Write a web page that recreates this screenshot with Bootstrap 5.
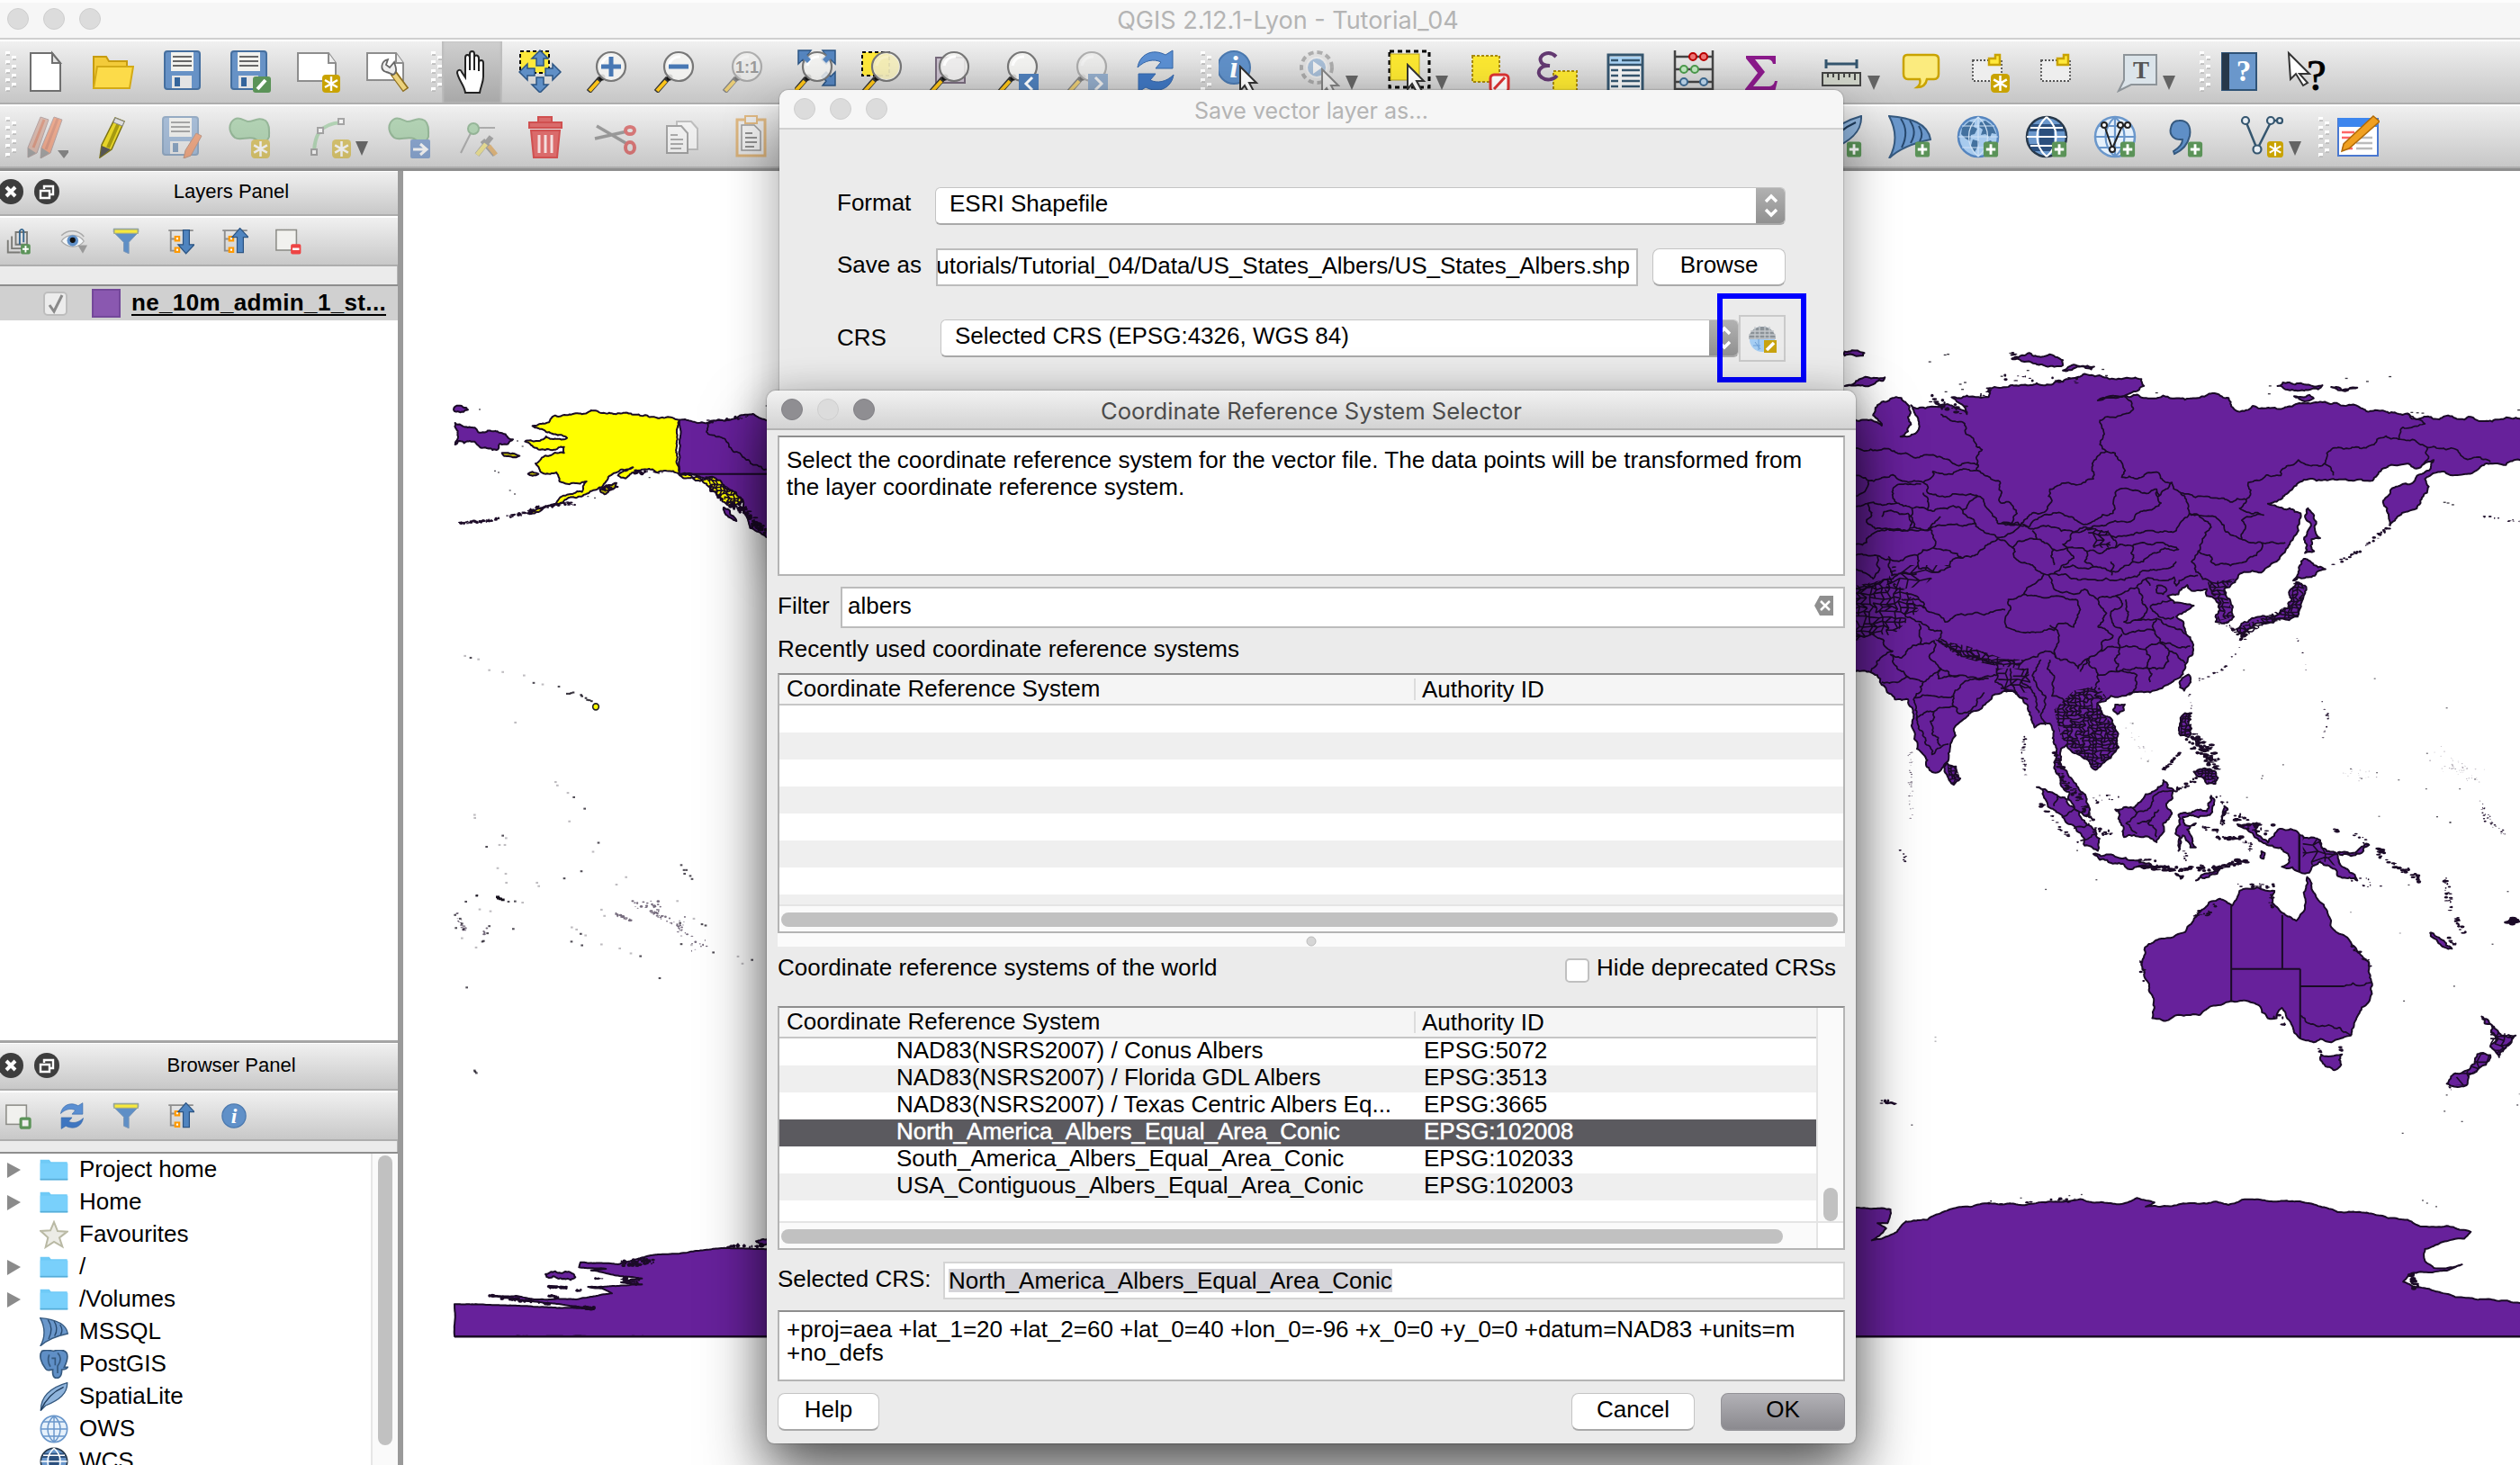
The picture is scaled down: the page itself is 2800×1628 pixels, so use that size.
<!DOCTYPE html>
<html lang="en">
<head>
<meta charset="utf-8">
<title>QGIS 2.12.1-Lyon - Tutorial_04</title>
<link rel="stylesheet" href="https://cdn.jsdelivr.net/npm/bootstrap@5.3.0/dist/css/bootstrap.min.css">
<script src="https://cdn.jsdelivr.net/npm/bootstrap@5.3.0/dist/js/bootstrap.bundle.min.js"></script>
<style>
html,body{width:2800px;height:1628px;overflow:hidden}
body{font:26px/30px "Liberation Sans",Arial,sans-serif;color:#000;background:#ebebeb}
svg{display:block;flex:none}
.titlebar{height:42px;flex:none;background:#f6f6f6;color:#b4b4b4;font-family:Inter,"Open Sans",sans-serif;font-size:25px;line-height:42px}
.lights{gap:16px}
.lights i{width:24px;height:24px;border-radius:50%;background:#dcdcdc;border:1.5px solid #cecece}
.lights i.on{background:#8f8e92;border-color:#828186}
.titlebar .cap{padding-top:3px}
.main-title{height:46px;padding-left:8px;border-bottom:2px solid #fff;box-shadow:inset 0 -2px #cfcfcf,inset 0 3px #fdfdfd;padding-bottom:2px}
.main-title .cap{padding-right:50px;font-size:27px;letter-spacing:0}
.toolstrip{flex:none;background:linear-gradient(#f0f0f0,#c6c6c6);border-bottom:2px solid #adadad}
.strip1{height:70px;padding-bottom:3px}
.strip2{height:74px;border-top:2px solid #fff;border-bottom:3px solid #8e8e8e;box-shadow:inset 0 -2px #adadad;padding-bottom:2px}
.faded{opacity:.5}
.pressed{background:linear-gradient(#cfcfcf,#a8a8a8);box-shadow:inset 2px 0 2px #bdbdbd,inset -2px 0 2px #bdbdbd;margin-bottom:-3px}
.side{width:448px;border-right:6px solid #9a9a9a;box-shadow:inset -1px 0 #b5b5b5}
.panelhead{height:50px;font-size:22px;background:linear-gradient(#f0f0f0,#c8c8c8);border-bottom:2px solid #adadad;border-top:1px solid #fff;padding-bottom:4px}
.panelhead.lower{height:53px;padding-bottom:3px}
.paneltools{height:56px;background:linear-gradient(#f0f0f0,#c8c8c8);border-bottom:2px solid #adadad;border-top:2px solid #fff}
.layers{height:843px;border-top:2px solid #8e8e8e;border-bottom:3px solid #a5a5a5;background:#fff}
.layerrow{height:38px;background:#d0d0d0;font-weight:700;padding-left:48px}
.tick{width:27px;height:27px;border:2px solid #bdbdbd;border-radius:5px;background:#ececec}
.swatch{width:32px;height:32px;background:#8a58b0;border:2px solid #74489a;margin-left:27px}
.lname{margin-left:12px;border-bottom:2px solid #000;line-height:26px;letter-spacing:.35px}
.tree{border-top:2px solid #8e8e8e;background:#fff;overflow:hidden}
.tree .item{height:36px;padding-left:7px}
.tree .item span{padding-bottom:3px;margin-left:12px}
.sbar{width:30px;background:#fafafa;border-left:2px solid #e6e6e6;padding:2px 6px}
.sbar b{display:block;width:16px;height:322px;border-radius:8px;background:#c1c1c1}
.mapview{background:#fff;overflow:hidden}
.win{position:absolute;background:#ebebeb;border-radius:10px 10px 0 0}
.win-save{left:866px;top:100px;width:1182px;height:500px;box-shadow:0 0 2px rgba(0,0,0,.45),0 24px 60px rgba(0,0,0,.38)}
.win-save .titlebar{border-radius:10px 10px 0 0;height:44px;border-bottom:2px solid #d0d0d0;padding-left:16px}
.win-save .form{padding:64px 64px 0 64px}
.win-crs{left:852px;top:434px;width:1210px;height:1170px;border-radius:10px 10px 8px 8px;box-shadow:0 0 2px rgba(0,0,0,.5),0 36px 70px rgba(0,0,0,.6),0 8px 44px rgba(0,0,0,.2)}
.win-crs .titlebar{height:44px;background:linear-gradient(#f2f2f2,#d3d3d3);color:#4b4b4b;border-radius:10px 10px 0 0;border-bottom:2px solid #b3b3b3;padding-left:16px;font-size:25.6px}
.fieldbox{background:#fff;border:2px solid #bcbcbc}
.combo{background:#fff;border:1.5px solid #c4c4c4;border-bottom:2px solid #a9a9a9;border-radius:6px;height:42px;overflow:hidden}
.combo .txt{padding:2px 0 0 15px}
.combo .knob{width:34px;background:linear-gradient(#b3b3b3,#8f8f8f);margin:-2px -2px -2px 0}
.pushbtn{background:#fff;border:1.5px solid #c4c4c4;border-bottom:2px solid #a9a9a9;border-radius:8px;height:42px;padding:0 0 6px;font-size:26px;line-height:30px;color:#000}
.pushbtn.okay{background:linear-gradient(#b2b1b6,#8b8a8f);border-color:#939297}
.marker{position:absolute;left:1908px;top:326px;width:99px;height:99px;border:6px solid #00f}
.txtbox{background:#fff;border:2px solid #b4b4b4;border-top-color:#8e8e8e;padding-left:8px}
.grid-t{background:#fff;border:2px solid #b4b4b4;border-top-color:#8e8e8e}
.grid-h{background:#f5f5f5;border-bottom:2px solid #c6c6c6}
.c1{width:705px;padding-left:8px}
.c2{border-left:2px solid #dcdcdc;padding-left:7px}
.r{height:30px;line-height:27px}
.r:nth-child(even){background:#efefef}
.r .c1{padding-left:130px}.r .c2{border:0;padding-left:11px}
.r.sel{background:#5b5a5f;color:#fff;-webkit-text-stroke:.5px #fff}
.hs{background:#fafafa;border-top:2px solid #e4e4e4;height:30px;padding:7px 2px}
.hs b{display:block;height:16px;border-radius:8px;background:#c1c1c1}
.seltext{background:#d5d4d9;line-height:26px;height:26px}
</style>
</head>
<body class="d-flex flex-column position-relative">
<div class="titlebar main-title d-flex align-items-center">
  <div class="lights d-flex"><i></i><i></i><i></i></div>
  <div class="cap flex-grow-1 text-center">QGIS 2.12.1-Lyon - Tutorial_04</div>
</div>
<div class="toolstrip strip1 d-flex align-items-center" id="bar1"></div>
<div class="toolstrip strip2 d-flex align-items-center" id="bar2"></div>
<div class="d-flex flex-grow-1" style="min-height:0">
  <aside class="side d-flex flex-column flex-shrink-0">
    <div class="panelhead d-flex align-items-center flex-shrink-0"><svg width="72" height="30"><use href="#dock"/></svg><span class="flex-grow-1 text-center">Layers Panel</span></div>
    <div class="paneltools d-flex align-items-center flex-shrink-0" id="bar3"></div>
    <div style="height:20px;flex:none"></div>
    <div class="layers flex-shrink-0">
      <div class="layerrow d-flex align-items-center"><span class="tick"><svg width="24" height="24"><path d="M5 13l5 7 9-18" fill="none" stroke="#8a8a8a" stroke-width="3"/></svg></span><span class="swatch"></span><span class="lname">ne_10m_admin_1_st...</span></div>
    </div>
    <div class="panelhead lower d-flex align-items-center flex-shrink-0"><svg width="72" height="30"><use href="#dock"/></svg><span class="flex-grow-1 text-center">Browser Panel</span></div>
    <div class="paneltools d-flex align-items-center flex-shrink-0" id="bar4"></div>
    <div style="height:12px;flex:none"></div>
    <div class="tree d-flex flex-grow-1"><div class="flex-grow-1" id="tree"></div><div class="sbar"><b></b></div></div>
  </aside>
  <main class="mapview flex-grow-1"><svg id="map" width="2352" height="1438" viewBox="448 190 2352 1438"></svg></main>
</div>

<section class="win win-save">
  <div class="titlebar d-flex align-items-center"><div class="lights d-flex"><i></i><i></i><i></i></div><div class="cap flex-grow-1 text-center" style="padding-right:120px">Save vector layer as...</div></div>
  <div class="form">
    <div class="d-flex" style="height:42px"><label style="width:109px;padding-top:2px">Format</label>
      <div class="combo d-flex flex-grow-1"><div class="txt flex-grow-1">ESRI Shapefile</div><div class="knob"><svg width="34" height="42"><use href="#updown"/></svg></div></div></div>
    <div class="d-flex" style="height:42px;margin-top:26px"><label style="width:110px;padding-top:3px">Save as</label>
      <div class="fieldbox d-flex justify-content-end overflow-hidden text-nowrap" style="width:780px;padding:2px 7px 0 0">utorials/Tutorial_04/Data/US_States_Albers/US_States_Albers.shp</div>
      <button class="pushbtn" style="width:148px;margin-left:16px">Browse</button></div>
    <div class="d-flex align-items-center" style="height:52px;margin-top:32px"><label style="width:115px;padding-bottom:3px">CRS</label>
      <div class="combo d-flex" style="width:887px"><div class="txt flex-grow-1">Selected CRS (EPSG:4326, WGS 84)</div><div class="knob"><svg width="34" height="42"><use href="#updown"/></svg></div></div>
      <div style="width:52px;height:52px;border:2px solid #cacaca;padding:8px 8px"><svg width="34" height="34" viewBox="0 0 34 34"><circle cx="16" cy="17" r="14" fill="#a5cdf3"/><path d="M1 17a15 14 0 0 1 30 0z" fill="#8b9298"/><path d="M1 12h30M3 8h26M1 16h30M8 3v14M13 2v14M19 2v14M24 3v14" stroke="#c4c8cc" stroke-width="1.3"/><path d="M8 20l6 8M6 24h8M12 17v12" stroke="#6d9fd6"/><rect x="18" y="18" width="14" height="14" fill="#c8a310"/><path d="M21 29l8-8" stroke="#fff" stroke-width="3.5"/></svg></div></div>
  </div>
</section>
<div class="marker"></div>

<section class="win win-crs">
  <div class="titlebar d-flex align-items-center"><div class="lights d-flex"><i class="on"></i><i></i><i class="on"></i></div><div class="cap flex-grow-1 text-center" style="padding-right:120px">Coordinate Reference System Selector</div></div>
  <div style="padding:6px 12px 0">
    <div class="txtbox" style="height:156px;padding-top:10px">Select the coordinate reference system for the vector file. The data points will be transformed from<br>the layer coordinate reference system.</div>
    <div class="d-flex" style="height:46px;margin-top:12px"><label style="width:70px;padding-top:6px">Filter</label><div class="fieldbox flex-grow-1 d-flex justify-content-between" style="padding:4px 9px 0 6px"><span>albers</span><svg width="24" height="28" viewBox="0 0 24 28"><path d="M7 4h15v22H7l-6-11z" fill="#8f8f8f"/><path d="M8 10l10 10M18 10L8 20" stroke="#fff" stroke-width="2.5"/></svg></div></div>
    <div style="height:50px;padding-top:8px">Recently used coordinate reference systems</div>
    <div class="grid-t d-flex flex-column" style="height:289px"><div class="grid-h d-flex" style="height:34px;line-height:31px"><div class="c1">Coordinate Reference System</div><div class="c2 my-1" style="line-height:24px">Authority ID</div></div>
      <div class="flex-grow-1 overflow-hidden"><div class="r"></div><div class="r"></div><div class="r"></div><div class="r"></div><div class="r"></div><div class="r"></div><div class="r"></div><div class="r"></div></div>
      <div class="hs flex-shrink-0"><b style="width:1174px"></b></div></div>
    <div class="d-flex justify-content-center align-items-center" style="height:15px;background:#fbfbfb;padding-top:2px"><svg width="12" height="12"><circle cx="6" cy="6" r="5" fill="#d6d6d6" stroke="#bcbcbc"/></svg></div>
    <div class="d-flex justify-content-between" style="height:66px;padding:8px 10px 0 0"><span>Coordinate reference systems of the world</span><span class="d-flex"><span style="width:27px;height:27px;margin:5px 8px 0 0;background:#fff;border:2px solid #c0c0c0;border-radius:5px"></span>Hide deprecated CRSs</span></div>
    <div class="grid-t d-flex" style="height:271px"><div class="d-flex flex-column" style="width:1152px"><div class="grid-h d-flex flex-shrink-0" style="height:34px;line-height:31px"><div class="c1">Coordinate Reference System</div><div class="c2 my-1" style="line-height:24px">Authority ID</div></div>
      <div class="flex-grow-1" id="rows"></div>
      <div class="hs flex-shrink-0"><b style="width:1113px"></b></div></div>
      <div class="flex-grow-1" style="border-left:2px solid #e4e4e4;background:#fafafa;padding-top:200px"><b class="d-block" style="width:16px;height:37px;border-radius:8px;background:#c1c1c1;margin-left:6px"></b><div style="height:30px;border-top:2px solid #e4e4e4;background:#fff"></div></div></div>
    <div class="d-flex" style="height:42px;margin-top:13px"><label style="width:184px;padding-top:4px">Selected CRS:</label><div class="flex-grow-1 d-flex" style="background:#fff;border:2px solid #d4d4d4;padding:6px 4px"><span class="seltext">North_America_Albers_Equal_Area_Conic</span></div></div>
    <div class="txtbox" style="height:79px;margin-top:12px;line-height:26px;padding-top:6px">+proj=aea +lat_1=20 +lat_2=60 +lat_0=40 +lon_0=-96 +x_0=0 +y_0=0 +datum=NAD83 +units=m<br>+no_defs</div>
    <div class="d-flex" style="margin-top:13px"><button class="pushbtn me-auto" style="width:113px">Help</button><button class="pushbtn" style="width:137px;margin-right:29px">Cancel</button><button class="pushbtn okay" style="width:138px">OK</button></div>
  </div>
</section>

<svg width="0" height="0" class="position-absolute"><defs>
<symbol id="dock" viewBox="0 0 72 30"><circle cx="12" cy="15" r="14" fill="#3d3d3d"/><path d="M7 10l10 10M17 10L7 20" stroke="#fff" stroke-width="4"/><circle cx="52" cy="15" r="14" fill="#3d3d3d"/><path d="M45 14h10v8H45zM49 12V9h10v9h-3" fill="none" stroke="#fff" stroke-width="2.4"/></symbol>
<symbol id="updown" viewBox="0 0 34 42"><path d="M11 17l6-6 6 6M11 26l6 6 6-6" fill="none" stroke="#fff" stroke-width="3.4"/></symbol>
<symbol id="grip" viewBox="0 0 48 48"><g fill="#fff"><path d="M18 2h5v4h-5zM25 7h5v4h-5zM18 12h5v4h-5zM25 17h5v4h-5zM18 22h5v4h-5zM25 27h5v4h-5zM18 32h5v4h-5zM25 37h5v4h-5zM18 42h5v4h-5z"/></g><path d="M19 6h4M26 11h4M19 16h4M26 21h4M19 26h4M26 31h4M19 36h4M26 41h4M19 46h4" stroke="#b5b5b5" stroke-width="1.5"/></symbol>
<symbol id="arr" viewBox="0 0 48 48"><path d="M17 29h14l-7 16z" fill="#646464"/></symbol>
<symbol id="bplus" viewBox="0 0 20 20"><rect x="1" y="1" width="17" height="18" rx="3" fill="#5b9358"/><path d="M9.500 4v12M4 10h11" stroke="#fff" stroke-width="3"/></symbol>
<symbol id="bstar" viewBox="0 0 20 20"><rect width="20" height="20" rx="4" fill="#c9a300"/><path d="M10 2v16M3 6l14 8M17 6L3 14" stroke="#fff" stroke-width="2.4"/></symbol>
<symbol id="lens" viewBox="0 0 48 48"><path d="M17 32L4 47" stroke="#333" stroke-width="6"/><path d="M15 35L5 46" stroke="#fcc419" stroke-width="4"/><circle cx="19" cy="31" r="3.500" fill="#111"/><circle cx="29" cy="19" r="16" fill="#f4f5f2" fill-opacity=".85" stroke="#777" stroke-width="2.200"/><path d="M18 18a12 12 0 0 1 13-10" stroke="#fff" stroke-width="3" fill="none"/></symbol>
<symbol id="new" viewBox="0 0 48 48"><path d="M8 4h24l9 11v31H8z" fill="#fff" stroke="#6f6f6f" stroke-width="2"/><path d="M32 4v11h9z" fill="#e4e4e4" stroke="#6f6f6f" stroke-width="2"/></symbol>
<symbol id="open" viewBox="0 0 48 48"><path d="M3 8h14l3 5h20v6H9L3 42z" fill="#f3cb3a" stroke="#c79c10" stroke-width="2"/><path d="M7 19h40l-4 24H3z" fill="#fcdb49" stroke="#d3aa16" stroke-width="2"/></symbol>
<symbol id="save" viewBox="0 0 48 48"><rect x="5" y="2" width="39" height="42" rx="3" fill="#6792c6" stroke="#456f9f" stroke-width="2"/><rect x="12" y="3" width="25" height="21" fill="#f2f2ee"/><path d="M14 8h21M14 13h21M14 18h21" stroke="#666" stroke-width="2"/><rect x="13" y="29" width="22" height="14" fill="#e4e4e4"/><rect x="16" y="31" width="6" height="10" fill="#35659c"/></symbol>
<symbol id="saveas" viewBox="0 0 48 48"><use href="#save" x="-3"/><rect x="26" y="30" width="20" height="18" rx="3" fill="#5b9358"/><path d="M31 44l9-10" stroke="#fff" stroke-width="4"/></symbol>
<symbol id="ncomp" viewBox="0 0 48 48"><path d="M1 4h34l8 11v20H1z" fill="#fff" stroke="#8d8d8d" stroke-width="2"/><path d="M35 4v11h8" fill="#eee" stroke="#8d8d8d" stroke-width="2"/><use href="#bstar" x="28" y="28" width="20" height="20"/></symbol>
<symbol id="mcomp" viewBox="0 0 48 48"><path d="M1 4h32l8 11v19H1z" fill="#fff" stroke="#8d8d8d" stroke-width="2"/><path d="M33 4v11h8" fill="#eee" stroke="#8d8d8d" stroke-width="2"/><path d="M30 26l14 19" stroke="#8d6d1c" stroke-width="8"/><path d="M31 28l12 16" stroke="#ecd27c" stroke-width="5"/><path d="M24 11c-8 2-9 12-2 14 5 1 8 5 10 1 3-4 0-7-1-12l-5 6-4-3z" fill="#eee" stroke="#666" stroke-width="1.800"/></symbol>
<symbol id="hand" viewBox="0 0 48 48"><path d="M16 47c-1-8-7-13-9-22 0-4 4-4 5-1l4 6V8c0-4 5-4 5 0V4c0-4 5-4 5 0v4c0-4 5-3 5 1v5c0-4 5-4 5 0v15c0 7-3 11-4 18z" fill="#fff" stroke="#222" stroke-width="2"/><path d="M21 8v14M26 8v14M31 12v11" stroke="#222" stroke-width="2"/></symbol>
<symbol id="pansel" viewBox="0 0 48 48"><rect x="2" y="2" width="32" height="24" fill="#ffe93b" stroke="#000" stroke-width="2" stroke-dasharray="4 3"/><path d="M24 1l9 9h-5v8h-8v-8h-5zM24 48l9-9h-5v-8h-8v8h-5zM1 25l9-9v5h8v8h-8v5zM47 25l-9-9v5h-8v8h8v5z" fill="#5f8fc6" stroke="#2c5584" stroke-width="1.500"/></symbol>
<symbol id="zin" viewBox="0 0 48 48"><use href="#lens"/><path d="M29 8v22M18 19h22" stroke="#4878b4" stroke-width="5"/></symbol>
<symbol id="zout" viewBox="0 0 48 48"><use href="#lens"/><path d="M18 19h22" stroke="#4878b4" stroke-width="5"/></symbol>
<symbol id="z11" viewBox="0 0 48 48"><use href="#lens"/><text x="29" y="26" text-anchor="middle" font-size="18" font-weight="700" fill="#555">1:1</text></symbol>
<symbol id="zfull" viewBox="0 0 48 48"><path d="M4 1h14l-4 5 5 5-5 5-5-5-5 5zM45 1H31l4 5-5 5 5 5 5-5 5 5zM45 40H31l4-5-5-5 5-5 5 5 5-5z" fill="#5585bf" stroke="#2c5584" stroke-width="1.500"/><use href="#lens" x="-4"/><path d="M5 2h12l-4 4 5 5-4 4-5-5-4 4zM44 2H32l4 4-5 5 4 4 5-5 4 4z" fill="#5585bf"/></symbol>
<symbol id="zsel" viewBox="0 0 48 48"><rect x="2" y="3" width="30" height="26" fill="#ffe93b" stroke="#000" stroke-width="2" stroke-dasharray="4 3"/><use href="#lens"/><circle cx="29" cy="19" r="14" fill="#f3e9a0" fill-opacity=".6"/></symbol>
<symbol id="zlay" viewBox="0 0 48 48"><rect x="9" y="9" width="32" height="28" fill="#c9bfcc" stroke="#776a7c" stroke-width="2"/><use href="#lens"/></symbol>
<symbol id="zlast" viewBox="0 0 48 48"><use href="#lens"/><rect x="25" y="27" width="22" height="21" fill="#4f7fba"/><path d="M40 31l-7 7 7 7" fill="none" stroke="#fff" stroke-width="3"/></symbol>
<symbol id="znext" viewBox="0 0 48 48"><use href="#lens"/><rect x="25" y="27" width="22" height="21" fill="#4f7fba"/><path d="M33 31l7 7-7 7" fill="none" stroke="#fff" stroke-width="3"/></symbol>
<symbol id="refresh" viewBox="0 0 48 48"><path d="M4 20C6 6 20-2 35 6l8-5v20H24l6-7c-8-4-18-2-26 6z" fill="#5b8fd2" stroke="#3566a8"/><path d="M44 28c-2 14-16 22-31 14l-8 5V27h19l-6 7c8 4 18 2 26-6z" fill="#3f76c0" stroke="#3566a8"/></symbol>
<symbol id="info" viewBox="0 0 48 48"><circle cx="24" cy="20" r="18" fill="#6090c8" stroke="#4a78ae" stroke-width="2"/><text x="24" y="31" text-anchor="middle" font-family="Liberation Serif" font-size="34" font-style="italic" font-weight="700" fill="#fff">i</text></symbol>
<symbol id="cur" viewBox="0 0 48 48"><path d="M2 2l18 18h-8l7 13-5 3-7-13-5 6z" fill="#fff" stroke="#333" stroke-width="2"/></symbol>
<symbol id="identify" viewBox="0 0 48 48"><use href="#info" x="-7"/><use href="#cur" x="22" y="17"/></symbol>
<symbol id="gear" viewBox="0 0 48 48"><circle cx="22" cy="20" r="17" fill="#ddd" stroke="#777" stroke-width="4" stroke-dasharray="6 4"/><circle cx="22" cy="20" r="11" fill="#6f9ccc" stroke="#eee" stroke-width="2"/><path d="M18 13l10 7-10 7z" fill="#fff"/><use href="#cur" x="26" y="20"/></symbol>
<symbol id="select" viewBox="0 0 48 48"><rect x="2" y="2" width="44" height="40" fill="none" stroke="#000" stroke-width="3" stroke-dasharray="5 4"/><rect x="3" y="5" width="32" height="29" fill="#fbe731" stroke="#b9a31a"/><use href="#cur" x="20" y="15"/></symbol>
<symbol id="desel" viewBox="0 0 48 48"><rect x="2" y="7" width="30" height="29" fill="#fbe731" stroke="#a88a10" stroke-width="2" stroke-dasharray="3 2"/><rect x="22" y="28" width="20" height="19" rx="4" fill="#fff" stroke="#d33" stroke-width="3"/><path d="M26 44l12-13" stroke="#d33" stroke-width="3"/></symbol>
<symbol id="eps" viewBox="0 0 48 48"><rect x="19" y="24" width="26" height="24" fill="#fbe731" stroke="#a88a10" stroke-width="2" stroke-dasharray="3 2"/><path d="M22 8C14 0 2 6 5 13c1 4 6 5 10 5C4 17-1 26 6 31c5 4 13 3 17-2" fill="none" stroke="#643a72" stroke-width="4"/></symbol>
<symbol id="table" viewBox="0 0 48 48"><rect x="5" y="6" width="38" height="42" fill="#f5f5f5" stroke="#35566f" stroke-width="3"/><rect x="7" y="8" width="34" height="8" fill="#a9d3f5"/><path d="M5 17h38M8 12h8M20 12h20M8 23h8M20 23h20M8 29h8M20 29h20M8 35h8M20 35h20M8 41h8M20 41h20" stroke="#35566f" stroke-width="2.500"/></symbol>
<symbol id="abacus" viewBox="0 0 48 48"><path d="M3 1v46M45 1v46M3 8h42M3 22h42M3 36h42M3 44h42" stroke="#444" stroke-width="2.500"/><g stroke-width="2"><g fill="#e77" stroke="#b00"><circle cx="23" cy="8" r="4"/><circle cx="35" cy="8" r="4"/></g><g fill="#bfe6bf" stroke="#4c9a4c"><circle cx="13" cy="22" r="4"/><circle cx="25" cy="22" r="4"/></g><g fill="#bcd6ec" stroke="#3f6b92"><circle cx="13" cy="36" r="4"/><circle cx="35" cy="36" r="4"/></g></g></symbol>
<symbol id="sigma" viewBox="0 0 48 48"><path d="M7 7h33v9h-3c-1-4-3-5-7-5H17l11 14-13 16h16c5 0 7-2 8-6h3l-3 12H6v-3l14-18L7 10z" fill="#8b1a8b"/></symbol>
<symbol id="ruler" viewBox="0 0 48 48"><path d="M7 16h34M7 11v10M41 11v10" stroke="#35566f" stroke-width="3"/><rect x="3" y="26" width="42" height="14" fill="#cfd3c8" stroke="#444" stroke-width="2"/><path d="M9 26v5M15 26v5M21 26v8M27 26v5M33 26v5M39 26v8" stroke="#444" stroke-width="2"/></symbol>
<symbol id="bubble" viewBox="0 0 48 48"><path d="M9 6h30c4 0 5 2 5 5v16c0 4-2 6-5 6h-8c-1 6-5 9-11 9 4-3 4-6 3-9H10c-4 0-5-3-5-6V11c0-3 1-5 4-5z" fill="#fbeb7e" stroke="#c9a300" stroke-width="2.500"/></symbol>
<symbol id="bookm" viewBox="0 0 48 48"><rect x="4" y="12" width="32" height="23" fill="#eee" stroke="#555" stroke-width="1.800" stroke-dasharray="2 2"/><path d="M24 10h5V6h5v11H22v-7z" fill="#ffe93b" stroke="#c9a300" stroke-width="2.500"/></symbol>
<symbol id="nbookm" viewBox="0 0 48 48"><use href="#bookm"/><use href="#bstar" x="24" y="27" width="21" height="21"/></symbol>
<symbol id="annot" viewBox="0 0 48 48"><path d="M8 6h36v33H16L2 46l6-12z" fill="#dbe4ea" stroke="#8d9499" stroke-width="2"/><text x="27" y="32" text-anchor="middle" font-family="Liberation Serif" font-size="27" font-weight="700" fill="#555">T</text></symbol>
<symbol id="help" viewBox="0 0 48 48"><rect x="5" y="4" width="38" height="41" fill="#6a97cb" stroke="#2f5377" stroke-width="2"/><rect x="5" y="4" width="8" height="41" fill="#27384a"/><text x="29" y="35" text-anchor="middle" font-family="Liberation Serif" font-size="33" font-weight="700" fill="#fff">?</text></symbol>
<symbol id="what" viewBox="0 0 48 48"><path d="M3 4l23 23H15l9 10-5 3-8-13-6 6z" fill="#fff" stroke="#333" stroke-width="2"/><text x="34" y="45" text-anchor="middle" font-family="Liberation Serif" font-size="48" fill="#000" stroke="#000">?</text></symbol>
<symbol id="pens" viewBox="0 0 48 48"><path d="M17 2l9 3L13 42 3 47V36z" fill="#c98d77" stroke="#866" stroke-width="1"/><path d="M32 2l9 3-13 37-11 6 1-12z" fill="#f0703c" stroke="#866"/><path d="M36 4L23 38M21 5L9 36" stroke="#c9532b" stroke-width="3"/><path d="M3 36l9 6-9 5zM18 36l9 6-10 6z" fill="#666"/><path d="M36 39h14l-7 9z" fill="#333"/></symbol>
<symbol id="pen" viewBox="0 0 48 48"><path d="M27 3l10 4-14 31-13 9 2-14z" fill="#e6d428" stroke="#7d7414" stroke-width="1.500"/><path d="M32 6L19 36" stroke="#a69a10" stroke-width="4"/><path d="M27 3l10 4-2 5-10-4z" fill="#ddd" stroke="#888"/><path d="M12 34l10 4-12 9z" fill="#555"/></symbol>
<symbol id="sedit" viewBox="0 0 48 48"><use href="#save" x="-2"/><path d="M40 20l6 3-12 22-8 3 2-9z" fill="#ef6c2a" stroke="#9a5030"/></symbol>
<symbol id="blob" viewBox="0 0 48 48"><path d="M3 8c6-8 12-3 18-1 6 1 12-6 20-1 5 4 4 12 4 18-3 8-10 6-16 2-8-3-16 3-22-1C1 20 0 13 3 8z" fill="#7fbf83" stroke="#4b8a50" stroke-width="2"/></symbol>
<symbol id="ablob" viewBox="0 0 48 48"><use href="#blob"/><use href="#bstar" x="25" y="27" width="21" height="21"/></symbol>
<symbol id="mblob" viewBox="0 0 48 48"><use href="#blob"/><rect x="25" y="27" width="22" height="21" rx="2" fill="#3467b5"/><path d="M28 38h14M36 32l7 6-7 6" fill="none" stroke="#fff" stroke-width="3"/></symbol>
<symbol id="curve" viewBox="0 0 48 48"><path d="M6 40C7 22 12 10 36 8" fill="none" stroke="#7fbf83" stroke-width="4"/><g fill="#fff" stroke="#666" stroke-width="2"><path d="M3 38h6v6H3zM10 14h6v6h-6zM33 4h6v6h-6z"/></g><use href="#bstar" x="26" y="27" width="21" height="21"/></symbol>
<symbol id="node" viewBox="0 0 48 48"><path d="M4 42L18 14h24" stroke="#777" stroke-width="2" fill="none"/><circle cx="18" cy="15" r="6" fill="#7fbf83" stroke="#4b8a50" stroke-width="2"/><path d="M22 44l16-20M28 28l14 16" stroke="#666" stroke-width="6"/><path d="M22 44l10-12" stroke="#ecd84c" stroke-width="5"/><path d="M35 34l8 10" stroke="#d88b20" stroke-width="5"/></symbol>
<symbol id="trash" viewBox="0 0 48 48"><path d="M6 8h36v6H6zM16 8V2h15v6" fill="#da6b6b" stroke="#d05050" stroke-width="2"/><path d="M8 17h32l-3 30H11z" fill="#da6b6b" stroke="#d05050" stroke-width="2"/><path d="M17 22v20M24 22v20M31 22v20" stroke="#f3dede" stroke-width="3"/></symbol>
<symbol id="cut" viewBox="0 0 48 48"><path d="M4 12l34 20M2 26l36-8" stroke="#555" stroke-width="3.500"/><g fill="none" stroke="#c11" stroke-width="4"><ellipse cx="41" cy="17" rx="5" ry="4"/><ellipse cx="41" cy="36" rx="5" ry="6"/></g></symbol>
<symbol id="copy" viewBox="0 0 48 48"><path d="M19 7h16l7 8v23H19z" fill="#fff" stroke="#999" stroke-width="2"/><path d="M8 12h16l7 8v22H8z" fill="#fff" stroke="#666" stroke-width="2"/><path d="M12 22h8M12 27h14M12 32h14M12 37h12" stroke="#777" stroke-width="2"/></symbol>
<symbol id="paste" viewBox="0 0 48 48"><rect x="9" y="5" width="31" height="40" fill="#eee" stroke="#d88b20" stroke-width="3"/><rect x="18" y="1" width="13" height="8" fill="#eee" stroke="#d88b20" stroke-width="2"/><path d="M14 11h14l7 7v21H14z" fill="#fff" stroke="#555" stroke-width="1.500"/><path d="M18 20h8M18 25h13M18 30h13M18 35h10" stroke="#444" stroke-width="2"/></symbol>
<symbol id="feather" viewBox="0 0 48 48"><path d="M2 47C2 28 14 10 46 1c1 16-10 28-36 38z" fill="#8fb4dc" stroke="#35597f" stroke-width="2"/><path d="M2 47C10 28 22 16 40 8" fill="none" stroke="#1e3a5a" stroke-width="2"/></symbol>
<symbol id="sail" viewBox="0 0 48 48"><path d="M1 1c24 2 43 8 46 26C28 31 12 37 1 48c8-14 9-30 0-47z" fill="#6a97cb" stroke="#35597f" stroke-width="2"/><path d="M14 4c7 10 7 20 1 32M24 6c6 9 6 16 1 25M34 12c4 6 4 12 1 17" fill="none" stroke="#27486d" stroke-width="2"/></symbol>
<symbol id="gwire" viewBox="0 0 48 48"><circle cx="24" cy="24" r="22" fill="#e6f1fb" stroke="#6a97cb" stroke-width="2.500"/><path d="M2 24h44M6 12h36M6 36h36M24 2v44M24 2c-14 12-14 32 0 44M24 2c14 12 14 32 0 44" fill="none" stroke="#6a97cb" stroke-width="2.200"/></symbol>
<symbol id="gdark" viewBox="0 0 48 48"><circle cx="24" cy="24" r="22" fill="#6a97cb" stroke="#27384a" stroke-width="2.500"/><path d="M8 10h32l4 8H4zM16 18h16v14H16zM4 32h40l-5 8H9z" fill="#2b4f7d"/><path d="M2 24h44M6 14h36M6 34h36M24 2c-14 12-14 32 0 44M24 2c14 12 14 32 0 44" fill="none" stroke="#fff" stroke-width="2.200"/></symbol>
<symbol id="gmap" viewBox="0 0 48 48"><circle cx="24" cy="24" r="22" fill="#a8cbee" stroke="#5585bf" stroke-width="2.500"/><path d="M6 14l8-7 6 1-1 5 4 2-3 6-4 1-1 7-5-3-5-5zM26 8l6-2 8 6 4 9-5-1-2 5-5-4-5 1 2-6-4-3zM18 27l7 2-1 5-4 7-4-7zM32 30l6-2 3 4-6 7z" fill="#43719f"/><path d="M24 2v44M2 24h44M6 12h36M6 36h36M24 2c-14 12-14 32 0 44M24 2c14 12 14 32 0 44" fill="none" stroke="#cfe2f5" stroke-width="1.200"/></symbol>
<symbol id="afeather" viewBox="0 0 48 48"><use href="#feather"/><use href="#bplus" x="29" y="28" width="19" height="20"/></symbol>
<symbol id="asail" viewBox="0 0 48 48"><use href="#sail"/><use href="#bplus" x="29" y="28" width="19" height="20"/></symbol>
<symbol id="agmap" viewBox="0 0 48 48"><use href="#gmap"/><use href="#bplus" x="29" y="28" width="19" height="20"/></symbol>
<symbol id="agdark" viewBox="0 0 48 48"><use href="#gdark"/><use href="#bplus" x="29" y="28" width="19" height="20"/></symbol>
<symbol id="agwfs" viewBox="0 0 48 48"><use href="#gwire"/><path d="M12 11l9 26L32 12l5-1" fill="none" stroke="#222" stroke-width="2"/><g fill="#fff" stroke="#222" stroke-width="2"><circle cx="12" cy="11" r="3"/><circle cx="21" cy="38" r="3"/><circle cx="30" cy="11" r="3"/><circle cx="38" cy="11" r="3"/></g><use href="#bplus" x="29" y="28" width="19" height="20"/></symbol>
<symbol id="comma" viewBox="0 0 48 48"><path d="M20 6c9-1 14 6 12 17-2 9-8 16-17 20l-1-3c7-4 10-9 10-13C14 28 9 22 11 14c1-5 4-8 9-8z" fill="#5f8fc6" stroke="#35597f" stroke-width="2"/><use href="#bplus" x="29" y="28" width="19" height="20"/></symbol>
<symbol id="vshape" viewBox="0 0 48 48"><path d="M6 6l13 32L35 6h8" fill="none" stroke="#35566f" stroke-width="2.500"/><g fill="#e8eef4" stroke="#35566f" stroke-width="2.200"><circle cx="6" cy="6" r="4"/><circle cx="19" cy="38" r="4.500"/><circle cx="34" cy="6" r="4"/><circle cx="44" cy="6" r="3"/></g><use href="#bstar" x="30" y="28" width="18" height="20"/></symbol>
<symbol id="editdoc" viewBox="0 0 48 48"><rect x="2" y="4" width="44" height="41" fill="#fff" stroke="#4a78d0" stroke-width="2"/><rect x="2" y="3" width="44" height="10" fill="#3d86ee"/><path d="M6 19h14M6 25h10M6 37h12" stroke="#f66" stroke-width="2.500"/><path d="M24 25h16M22 31h18M22 37h18" stroke="#bbb" stroke-width="2.500"/><path d="M41 1l7 6-34 30-8 3 2-8z" fill="#f0a020" stroke="#b06a08" stroke-width="1.500"/></symbol>
<symbol id="p-add" viewBox="0 0 48 48"><path d="M6 22v22h22M13 15v22h20M20 8h20v22H20z" fill="none" stroke="#7a7a76" stroke-width="3"/><path d="M27 30V6q4-6 7 0v20" fill="none" stroke="#35668f" stroke-width="3"/><use href="#bplus" x="28" y="28" width="20" height="20"/></symbol>
<symbol id="p-eye" viewBox="0 0 48 48"><path d="M2 24c10-14 30-14 40 0-10 14-30 12-40 0z" fill="#f3f6f8" stroke="#aaa" stroke-width="2"/><path d="M2 14c12-12 30-10 40 2" fill="none" stroke="#aaa" stroke-width="2.500"/><circle cx="22" cy="23" r="10" fill="#6090c8"/><circle cx="22" cy="22" r="5" fill="#111"/><path d="M31 31h17l-8 15z" fill="#999"/></symbol>
<symbol id="p-filter" viewBox="0 0 48 48"><path d="M2 2h44v6L29 26v20l-9-4V26L2 8z" fill="#5f8fc6" stroke="#7a95b5" stroke-width="1.500"/><path d="M3 3h42v7H3z" fill="#f7e93c" stroke="#9ea88c" stroke-width="2"/></symbol>
<symbol id="p-up" viewBox="0 0 48 48"><path d="M2 5h44M6 5v36h10M6 20h10" fill="none" stroke="#8d8d8d" stroke-width="3"/><path d="M14 16h7v7h-7zM14 36h7v7h-7z" fill="#fff" stroke="#f90" stroke-width="3.500"/><path d="M33 1l15 16h-9v27H28V17h-9z" fill="#5085c0" stroke="#2c5584" stroke-width="2"/></symbol>
<symbol id="p-down" viewBox="0 0 48 48"><path d="M2 5h44M6 5v36h10M6 20h10" fill="none" stroke="#8d8d8d" stroke-width="3"/><path d="M14 16h7v7h-7zM14 36h7v7h-7z" fill="#fff" stroke="#f90" stroke-width="3.500"/><path d="M33 46l15-16h-9V4H28v26h-9z" fill="#5085c0" stroke="#2c5584" stroke-width="2"/></symbol>
<symbol id="p-rem" viewBox="0 0 48 48"><rect x="3" y="4" width="36" height="36" fill="#f1f1ee" stroke="#8d8d88" stroke-width="2.500"/><rect x="29" y="29" width="18" height="18" rx="3" fill="#e44"/><path d="M32 38h12" stroke="#fff" stroke-width="4"/></symbol>
<symbol id="p-new" viewBox="0 0 48 48"><rect x="3" y="5" width="36" height="34" fill="#f1f1ee" stroke="#8d8d88" stroke-width="2.500"/><rect x="29" y="29" width="16" height="16" rx="2" fill="#eee" stroke="#5b9358" stroke-width="5"/></symbol>
<symbol id="p-info" viewBox="0 0 48 48"><circle cx="24" cy="24" r="21" fill="#6090c8" stroke="#4a78ae" stroke-width="2"/><text x="24" y="36" text-anchor="middle" font-family="Liberation Serif" font-size="38" font-style="italic" font-weight="700" fill="#fff">i</text></symbol>
<symbol id="t-folder" viewBox="0 0 48 48"><path d="M1 7h15l3 4h27v30H1z" fill="#6fcaf6"/><path d="M1 13h46v27H1z" fill="#79d0fb"/><path d="M1 40h46" stroke="#55add8" stroke-width="2.500"/></symbol>
<symbol id="t-star" viewBox="0 0 48 48"><path d="M24 3l6 15 16 1-13 10 5 15-14-8-14 9 4-16L2 18l16-1z" fill="#ecece6" stroke="#b9b9a4" stroke-width="3"/></symbol>
<symbol id="t-pg" viewBox="0 0 48 48"><path d="M4 2c10-3 16 0 20 0 8-3 18-2 21 3 4 8-1 18-4 24l6 0c-2 4-7 4-10 4 0 7-2 14-8 14-6 1-8-6-7-14-5 0-10 4-13-3C3 22-2 10 4 2z" fill="#5f8fc6" stroke="#35597f" stroke-width="2.500"/><path d="M16 8c-3 8-2 14 2 20M30 5c6 6 6 14 0 22v12M20 14h6v12" fill="none" stroke="#35597f" stroke-width="2.500"/></symbol>
</defs></svg>

<script>
/* ---------- toolbars: [centre on the bar, symbol, dimmed] ---------- */
function bar(id, items, size) {
  let x = 0, h = '';
  for (const [c, name, dim] of items) {
    if (name === 'hand') { h += `<span class="pressed d-flex justify-content-center align-items-center align-self-stretch" style="width:67px;margin-left:${491 - x}px"><svg width="48" height="48"><use href="#hand"/></svg></span>`; x = 558; continue; }
    const l = c - size / 2;
    h += `<svg class="${dim ? 'faded' : ''}" width="${size}" height="${size}" style="margin-left:${l - x}px;overflow:visible"><use href="#${name}"/></svg>`;
    x = l + size;
  }
  document.getElementById(id).innerHTML = h;
}
bar('bar1', [[12,'grip'],[50,'new'],[125,'open'],[202,'save'],[279,'saveas'],[354,'ncomp'],[431,'mcomp'],[485,'grip'],[525,'hand'],[600,'pansel'],[674,'zin'],[749,'zout'],[825,'z11',1],[907,'zfull'],[980,'zsel'],[1055,'zlay'],[1131,'zlast'],[1208,'znext',1],[1284,'refresh'],[1340,'grip'],[1378,'identify'],[1465,'gear',1],[1502,'arr'],[1566,'select'],[1602,'arr'],[1658,'desel'],[1731,'eps'],[1806,'table'],[1882,'abacus'],[1957,'sigma'],[2046,'ruler'],[2082,'arr'],[2134,'bubble'],[2212,'nbookm'],[2288,'bookm'],[2376,'annot'],[2410,'arr'],[2450,'grip'],[2488,'help'],[2564,'what']], 48);
bar('bar2', [[12,'grip'],[52,'pens',1],[125,'pen'],[202,'sedit',1],[278,'ablob',1],[367,'curve',1],[402,'arr'],[455,'mblob',1],[532,'node',1],[606,'trash'],[683,'cut',1],[757,'copy',1],[834,'paste',1],[2046,'afeather'],[2122,'asail'],[2198,'agmap'],[2274,'agdark'],[2350,'agwfs'],[2425,'comma'],[2513,'vshape'],[2550,'arr'],[2582,'grip'],[2620,'editdoc']], 48);
bar('bar3', [[20,'p-add'],[82,'p-eye'],[140,'p-filter'],[201,'p-down'],[261,'p-up'],[320,'p-rem']], 30);
bar('bar4', [[20,'p-new'],[80,'refresh'],[140,'p-filter'],[201,'p-up'],[260,'p-info']], 30);

/* ---------- browser tree and CRS rows ---------- */
document.getElementById('tree').innerHTML = [['Project home','t-folder',1],['Home','t-folder',1],['Favourites','t-star'],['/','t-folder',1],['/Volumes','t-folder',1],['MSSQL','sail'],['PostGIS','t-pg'],['SpatiaLite','feather'],['OWS','gwire'],['WCS','gdark']]
  .map(([t, i, a]) => `<div class="item d-flex align-items-center"><svg width="37" height="20"><path d="${a ? 'M1 2l15 8-15 9z' : ''}" fill="#8b8b8b"/></svg><svg width="32" height="32"><use href="#${i}"/></svg><span>${t}</span></div>`).join('');
document.getElementById('rows').innerHTML = [['NAD83(NSRS2007) / Conus Albers','5072'],['NAD83(NSRS2007) / Florida GDL Albers','3513'],['NAD83(NSRS2007) / Texas Centric Albers Eq...','3665'],['North_America_Albers_Equal_Area_Conic','102008'],['South_America_Albers_Equal_Area_Conic','102033'],['USA_Contiguous_Albers_Equal_Area_Conic','102003']]
  .map(([a, b]) => `<div class="r d-flex ${b === '102008' ? 'sel' : ''}"><div class="c1">${a}</div><div class="c2">EPSG:${b}</div></div>`).join('');

/* ---------- map: coastlines are refined by midpoint displacement ---------- */
let seed = 7;
const rnd = () => (seed = (seed * 16807) % 2147483647) / 2147483647;
const P = s => s.trim().split(/\s+/).map(p => p.split(',').map(Number));
function rough(pts, close, amp = .2) {
  const out = [], n = pts.length;
  const sub = (a, b) => {
    const d = Math.hypot(b[0] - a[0], b[1] - a[1]);
    if (d < 7) { out.push(a); return; }
    const k = (rnd() - .5) * Math.min(d, 60) / d * amp * 2, t = .4 + rnd() * .2;
    const m = [a[0] + (b[0] - a[0]) * t - (b[1] - a[1]) * k, a[1] + (b[1] - a[1]) * t + (b[0] - a[0]) * k];
    sub(a, m); sub(m, b);
  };
  for (let i = 0; i < n - (close ? 0 : 1); i++) sub(pts[i], pts[(i + 1) % n]);
  if (!close) out.push(pts[n - 1]);
  return 'M' + out.map(p => p[0].toFixed(1) + ' ' + p[1].toFixed(1)).join('L') + (close ? 'Z' : '');
}
const land = (s, amp, c = '#67219b') => `<path d="${rough(P(s), true, amp)}" fill="${c}"/>`;
const lines = (a, amp) => `<path d="${a.map(s => rough(P(s), false, amp)).join('')}" fill="none" stroke-width="1.7"/>`;
function mesh(s, step) {
  const pts = P(s), xs = pts.map(p => p[0]), ys = pts.map(p => p[1]), id = 'm' + Math.floor(rnd() * 1e9);
  const x0 = Math.min(...xs) - step, y0 = Math.min(...ys) - step, nx = Math.ceil((Math.max(...xs) - x0) / step) + 1, ny = Math.ceil((Math.max(...ys) - y0) / step) + 1;
  const g = []; for (let j = 0; j <= ny; j++) { g.push([]); for (let i = 0; i <= nx; i++) g[j].push([x0 + (i + (j % 2) / 2 + (rnd() - .5) * .75) * step, y0 + (j + (rnd() - .5) * .75) * step]); }
  let d = ''; for (let j = 0; j < ny; j++) for (let i = 0; i < nx; i++) { const a = g[j][i], b = g[j][i + 1], c = g[j + 1][i]; if (rnd() < .85) d += `M${a}L${b}`; if (rnd() < .85) d += `M${a}L${c}`; }
  return `<clipPath id="${id}"><path d="M${pts.join('L')}Z"/></clipPath><path clip-path="url(#${id})" d="${d}" fill="none" stroke-width="1.6"/>`;
}
/* small islets scattered along a line */
function chain(s, n, spread = 5, r = 2.4) {
  const p = P(s); let h = '';
  for (let i = 0; i < n; i++) { const t = rnd() * (p.length - 1), k = Math.floor(t), f = t - k, a = p[k], b = p[k + 1] || a;
    h += `<ellipse cx="${(a[0] + (b[0] - a[0]) * f + (rnd() - .5) * spread * 2).toFixed(1)}" cy="${(a[1] + (b[1] - a[1]) * f + (rnd() - .5) * spread * 2).toFixed(1)}" rx="${(r * (.4 + rnd())).toFixed(1)}" ry="${(r * (.3 + rnd() * .7)).toFixed(1)}" fill="#1c0b28" stroke="none"/>`; }
  return h;
}
const dots = (s, o, w = 2, h = 1.7) => P(s).map(p => `<rect x="${p[0] - w}" y="${p[1] - h}" width="${w * 2}" height="${h * 2}" fill="#15101c" fill-opacity="${o}" stroke="none"/>`).join('');

const chinaSea = '500,1120 545,1065 600,1050 620,1085 600,1100 610,1130 640,1170 648,1230 630,1260 595,1295 580,1270 555,1250 530,1220 515,1200';
const asia = land(`-40,275 46,280 80,278 105,295 85,265 90,250 130,215 150,215 165,235 165,270 172,292 165,312 148,327 182,318 190,290 178,250 172,236 205,245 240,235 270,240 300,262 290,235 265,213 300,208 350,212 350,187 400,178 460,172 520,168 570,145 620,155 700,160 706,180 690,195 600,222 690,205 705,215 750,208 800,220 850,207 900,215 925,255 955,238 980,245 1045,240 1070,230 1180,235 1220,255 1310,260 1320,275 1440,278 1455,270 1568,275 1700,290 1700,400 1568,395 1510,405 1450,435 1380,430 1350,450 1355,490 1340,520 1310,545 1270,585 1265,550 1257,510 1280,475 1330,445 1360,425 1370,395 1330,420 1280,410 1240,440 1230,455 1140,450 1085,450 1040,485 990,522 1010,530 1040,535 1065,550 1060,600 1040,640 1010,690 975,722 935,720 915,750 890,770 905,810 912,850 900,865 870,865 880,830 870,800 850,790 850,770 815,775 805,758 785,785 760,790 775,810 820,818 780,850 800,885 812,910 818,940 800,990 770,1040 720,1070 660,1080 630,1080 600,1100 610,1130 640,1170 648,1230 630,1260 595,1295 580,1270 555,1250 530,1220 515,1240 515,1290 540,1320 565,1360 582,1410 575,1430 540,1390 515,1330 500,1290 500,1220 490,1160 455,1172 440,1120 410,1070 360,1078 345,1100 270,1175 262,1220 258,1265 228,1303 200,1250 175,1160 165,1090 135,1090 115,1060 85,1015 -40,1015`, .17)
+ lines(['40,362 70,368 120,362 175,385 250,392 325,410','240,262 262,280 290,285 298,320 335,365 325,400 322,425','200,460 222,428 322,425 372,455 380,490 378,520 400,520 415,550 400,580 372,580 350,540 325,500 290,495 210,490 200,460','46,440 75,455 130,438 200,460','75,455 62,490 46,500','130,480 170,465 195,465','130,480 140,520 175,535 210,540 200,490','46,530 75,520 140,520','75,520 82,548 70,575 90,595 145,598 180,590 175,535','105,560 110,545 165,550 170,590','210,540 240,535 290,540 325,500','240,560 210,600 180,590','210,600 245,585 320,580 290,540','46,640 90,605 150,600 220,600 222,650 187,672 46,672','320,580 345,608 370,620 290,680 222,650','187,672 190,710 235,720 262,705 262,690 290,680','95,675 100,710 85,740 46,712','120,675 128,730 185,725','378,580 430,575 480,545','380,580 440,590 470,560 500,548','430,575 410,600 370,620 405,650 420,690 450,700 475,725 455,755 430,785 395,800 400,830 388,855 390,880 425,895 460,895 500,890 510,870 545,880 560,830 550,800 510,790 430,785','480,545 490,480 545,465 590,450 590,400 620,370 640,375 655,445 690,450 735,430 770,460 790,490 870,505 940,510 945,460 1020,440 1060,395 1120,405 1140,440','620,370 605,350 615,320 605,280 680,250 660,210','940,510 925,535 980,555 930,570 935,600 930,625 975,635 1030,635','500,548 540,560 575,582 635,550 640,490 700,490 735,480 745,520 720,540 690,550 680,570 610,585 545,605','1120,405 1125,375 1215,360 1240,335 1290,335 1300,300 1350,290 1310,262','1290,335 1355,358 1345,410','1355,358 1410,360 1440,390 1500,400','770,460 740,500 735,480','790,490 810,550 870,560 890,595 930,625','810,550 780,600 740,605 690,605 630,615','810,550 860,590 840,630 830,660 870,700 940,690 975,655 975,635','830,660 815,690 825,720 860,750 870,790','545,605 500,590 450,595 425,580','545,605 520,640 545,680 520,700 500,725 475,725','450,600 460,625 420,630 405,650','460,625 500,655 500,700','500,655 545,650 575,660 610,665 640,650 680,645 680,690 640,720 590,705 520,705','545,605 600,600 630,615 640,650','575,660 570,690 590,705','630,690 632,730','680,645 720,640 785,655 735,665 705,690 680,690','500,725 540,740 600,745 680,735 735,715 780,690','488,730 500,770 545,785 570,770 600,800 620,840 600,880','600,800 640,790 655,820 630,850 640,880','640,790 690,765 710,740 720,760','690,765 710,820 690,860 660,865 665,800','710,740 750,745 775,735 780,760 830,730','735,760 755,765 750,785 735,780 735,760','720,820 770,800','720,820 740,850 775,850','690,860 735,855 730,890 660,900 640,880','730,890 745,925 785,940 812,935','735,855 770,880 800,900','190,800 205,825 250,865 270,850 340,845 388,830','46,770 90,760 130,740 185,725','150,800 190,800 160,780','205,825 165,815 160,850 195,865 240,890 235,920 290,950 350,985 420,990 480,950 505,970 510,900 490,875','240,915 260,940 320,965 380,985','505,970 530,975 555,1000 580,970 560,1010','490,975 500,1030 495,1080 525,1105','600,880 635,905 605,950 650,940 655,900','650,940 645,1010 600,1020 580,990 605,950','650,940 710,945 715,1000 645,1010','710,945 740,925 765,950 750,1000 715,1000 720,1040','645,1010 690,1020 670,1075','600,1020 595,1050','765,950 800,985','190,870 195,930 150,970 125,960 140,1000 165,1025 130,1040 105,1040','195,930 225,920 215,960 240,1000 290,1020 370,1020','165,1025 200,1040 240,1000','200,1040 180,1085 270,1080 285,1050 350,1030','240,1000 235,1030 290,1020','270,1080 280,1130 320,1110 340,1070','180,1085 185,1150 225,1125 270,1110','225,1125 220,1190 240,1225','185,1150 200,1190 220,1250 258,1220','370,990 365,1040 410,1070','400,1000 405,1050 440,1090','440,1000 425,1040 455,1080 465,1130','470,975 450,1020 480,1080 470,1140 480,1165','46,905 80,900 110,920 130,950 80,1010'])
+ mesh('46,760 120,740 165,780 190,830 130,905 90,900 46,920', 14) + mesh(chinaSea, 9.5) + mesh('225,915 300,935 380,970 430,975 420,1000 350,990 280,965', 12) + mesh('130,700 260,700 200,760 110,780', 22) + mesh('850,750 915,740 890,770 912,850 870,865 880,830', 12) + mesh('365,1000 440,1000 450,1070 380,1070', 18) + mesh('575,595 625,600 630,650 590,650',16)
+ land('46,165 80,158 112,155 108,165 60,178 20,180') + land('20,80 65,84 62,92 20,92')
+ land('405,100 440,85 490,88 520,105 520,120 480,122 425,108') + land('520,135 545,118 592,124 585,132') + land('1012,180 1040,170 1115,178 1105,190 1030,190') + land('1135,183 1195,185 1160,192') + land('1050,210 1085,206 1095,216 1065,220')
+ chain('200,215 290,255', 24, 14, 5) + chain('375,155 480,160 560,165',18,8,4) + chain('400,85 420,105',10,6,5) + chain('330,212 350,190',8,6,4)
+ dots('250,90 257,88 215,110 285,175 296,170 290,190 252,197 440,135 380,152 400,85 612,132 620,150 995,180 993,203 1170,158 1218,167 1270,153 735,200 1320,257 1333,258 1345,259 1565,250 1395,518 1414,525 1403,520', .85, 3)
+ land('1082,535 1095,560 1098,600 1110,622 1090,625 1096,660 1075,665 1082,600 1075,560') + land('1072,682 1095,700 1122,712 1090,735 1060,735 1048,745 1062,715') + land('1055,750 1075,760 1070,800 1058,850 1020,855 985,870 945,885 930,915 920,885 945,865 985,850 1020,835 1045,800')
+ mesh('1050,745 1075,755 1070,800 1058,850 985,870 930,915 915,885 985,850 1040,815',10)
+ chain('1120,712 1160,685 1200,660 1240,620 1270,585',34,4,4) + chain('905,880 935,905 930,930',16,8,4) + chain('930,935 890,1000 830,1035',16,4,3) + chain('880,860 910,885',8,8,3) + chain('1040,860 1080,980 1070,1030',6,3,2) + chain('1115,1095 1130,1150 1115,1215',12,3,2.4) + chain('1480,555 1568,575',12,4,3)
+ land('808,1018 808,1050 798,1065 788,1045 798,1025') + land('640,1105 662,1105 660,1122 645,1133 635,1120') + land('255,1275 275,1285 285,1320 270,1338 258,1320')+ mesh('255,1275 275,1285 285,1320 270,1338 258,1320',8)
+ land('800,1130 815,1130 815,1175 808,1200 790,1195 790,1150') + mesh('800,1130 815,1130 815,1175 808,1200 790,1195 790,1150',9) + chain('808,1195 850,1240 865,1285',90,17,5) + land('845,1290 870,1300 870,1335 850,1335 838,1315 820,1300') + mesh('845,1290 870,1300 870,1335 850,1335 838,1315 820,1300',8) + chain('790,1240 750,1300',24,3,4) + chain('780,1355 830,1320',20,5,4) + chain('810,1070 815,1120',6,3,2)
+ land('750,1325 775,1355 760,1390 770,1420 750,1450 735,1505 700,1490 660,1490 640,1410 680,1405 710,1365') + lines(['680,1405 690,1420 720,1405 740,1360 775,1355','690,1420 665,1450 690,1480','740,1410 715,1450 735,1490','690,1450 720,1440'])
+ land('460,1345 495,1360 540,1400 560,1430 595,1470 600,1530 570,1515 530,1450 510,1420 480,1380') + lines(['510,1370 500,1400','545,1410 520,1430','580,1450 545,1465','595,1480 560,1500'])
+ chain('435,1190 425,1250 440,1320',22,4,3) + chain('470,1395 510,1460 550,1500',24,6,4) + chain('600,1385 640,1370',12,12,3) + chain('590,1470 630,1480',14,8,5) + chain('505,1240 520,1330 560,1380',40,7,5) + chain('570,1400 585,1440',14,7,5)
+ land('785,1425 850,1415 860,1370 862,1412 850,1428 795,1432 800,1455 825,1450 805,1468 825,1520 812,1520 795,1485 785,1530 778,1480') + land('890,1400 898,1410 890,1450 884,1430') + chain('870,1370 900,1400 885,1450',16,6,4) + chain('830,1460 880,1475',10,5,5) + chain('870,1495 935,1490',26,5,5) + chain('900,1430 990,1470',28,16,5)
+ `<g opacity=".6">${chain('170,1245 172,1440',34,5,2)}</g>` + chain('150,1530 160,1560',8,5,2.5) + chain('1480,1385 1490,1440 1535,1480',24,5,2.4)
+ dots('1025,1280 978,1312 976,1320 1290,1324 1353,1350 1240,1303 1180,1292 1355,1247 1408,1448 1205,1320 1235,1030 935,1005 1430,1350 1465,1322 1400,1115 1245,1430 942,1375 680,1160 715,1270', .6)
+ `<g opacity=".35">${chain('1360,1245 1430,1290 1470,1320',50,26,1.8)}${chain('1150,1300 1240,1320',16,16,1.6)}${chain('670,1165 720,1270',16,14,1.8)}</g>`;

const south = land('880,258 908,278 925,235 965,225 1005,235 1000,270 1030,305 1055,322 1068,300 1072,240 1080,195 1095,240 1118,275 1135,340 1175,375 1220,440 1229,505 1220,560 1195,600 1180,655 1135,675 1110,665 1095,675 1062,662 1045,625 1022,575 1010,605 990,605 970,568 935,553 905,555 860,570 835,595 785,595 755,613 725,605 728,560 715,500 700,450 708,400 740,375 800,355 830,300 855,268', .12)
+ `<path d="M906 278V555M906 462H1064M1023 305V462M1064 462V662M1064 512H1165" fill="none" stroke-width="2"/>` + lines(['1165,512 1185,503 1205,510 1229,500','1064,597 1110,628 1155,632 1180,655'])
+ chain('920,218 1005,222',18,7,4) + chain('825,300 850,300 875,262',14,8,4) + chain('1000,240 995,290',8,5,4) + chain('700,440 705,500',8,4,4) + chain('1165,370 1225,450',12,4,4) + chain('1010,600 1025,625',6,8,5)
+ land('1112,710 1135,715 1160,710 1158,740 1140,755 1122,745') + chain('1100,690 1115,706',4,3,4) + chain('1155,690 1160,705',4,3,4)
+ land('1480,600 1510,635 1525,655 1558,655 1545,680 1520,718 1500,688 1512,660') + mesh('1500,640 1558,655 1545,680 1520,718 1500,688',14) + land('1478,706 1500,712 1490,740 1450,770 1445,800 1425,805 1400,795 1420,765 1455,748') + mesh('1478,706 1500,712 1490,740 1450,770 1445,800 1400,795 1455,748',22) + chain('1400,795 1415,815',5,4,3)
+ land('920,42 965,38 975,80 990,95 1020,55 1062,72 1110,88 1150,130 1160,165 1195,205 1150,192 1110,150 1085,182 1062,180 1022,165 1038,145 1020,110 985,98 970,90 950,65') + `<path d="M1062 72V180" stroke-width="2.5"/>` + mesh('1070,78 1110,88 1150,130 1160,170 1120,150 1090,160 1070,140',22)
+ land('1150,124 1185,125 1215,98 1222,102 1205,125 1180,134 1155,130') + chain('1180,60 1220,100',12,6,3) + chain('1245,110 1255,140 1345,205',40,8,5) + chain('1190,200 1240,220',12,10,3) + chain('1395,200 1410,290 1440,360',40,7,4) + land('1362,357 1390,378 1412,403 1385,390') + chain('1400,370 1418,390',8,5,4) + chain('1540,320 1560,325',14,8,6)
+ land('590,128 650,140 700,152 735,165 700,165 640,155 605,145') + chain('700,165 780,172 870,170 945,145',90,6,6) + land('825,205 845,185 880,172 855,195') + land('778,185 796,192 790,200') + chain('690,150 730,145',8,4,4) + chain('910,80 950,100 955,130',16,5,3) + land('975,120 983,125 980,142 973,138')
+ chain('800,120 800,150',6,4,3) + chain('830,165 860,160',5,4,3) + chain('1140,60 1150,65',6,5,4) + dots('481,231 597,203 553,118 1313,218 1378,20 1408,36 1540,237 1302,555 1417,512 1395,875 1435,905 1299,939 159,150 174,915 1562,857 1376,1152 1355,1142 1345,1134 424,1127 535,1120 563,1117 1505,390 1400,828', .75) + dots('228,660 228,672 1293,358 1180,297 1567,825', .35) + chain('108,848 132,850',12,5,5) + chain('1480,0 1535,70',10,6,2)+chain('1395,205 1400,200',3,4,4)
+ land('-200,1150 46,1155 125,1160 118,1200 95,1200 115,1215 82,1250 105,1245 140,1225 160,1195 210,1190 250,1165 330,1145 480,1140 560,1130 650,1145 690,1127 730,1140 710,1152 870,1137 900,1147 930,1132 1050,1137 1105,1150 1150,1168 1235,1175 1310,1190 1340,1210 1400,1208 1455,1225 1440,1245 1390,1255 1350,1275 1350,1310 1370,1330 1435,1320 1400,1338 1320,1345 1300,1370 1325,1385 1420,1415 1568,1432 1800,1436 1800,1640 -200,1640', .08)
+ `<path d="M-300 1529H1900V1800H-300z" fill="#fff" stroke="none"/><path d="M-300 1529H1700" stroke-width="2.5"/>` + chain('1320,1350 1330,1385',16,6,6) + chain('330,1142 560,1132',16,5,4);

const west = land('943,260 1035,270 1060,262 1100,262 1190,240 1245,262 1245,655 1180,620 1155,560 1155,525 1100,490 1050,450 943,440', .1)
+ `<path d="M943 440H1245" stroke-width="2"/>` + lines(['1035,270 1035,300 1100,330 1110,350 1160,385 1190,410 1245,430'])
+ land('455,280 510,268 530,245 590,240 650,228 720,238 800,242 860,250 943,260 943,440 870,435 820,425 765,455 740,445 790,418 750,425 700,465 640,505 600,520 540,540 490,556 440,572 540,528 620,500 635,465 590,470 545,465 535,435 500,440 480,430 465,405 495,380 560,370 560,350 510,358 460,352 430,332 500,315 570,320 500,300', .14, '#ff0')
+ land('943,440 1000,450 1050,450 1100,490 1155,525 1130,545 1080,520 1040,480 990,455', .2, '#ff0') + mesh('1030,448 1060,450 1155,520 1150,545 1080,530',12) + chain('1040,480 1110,540 1140,560',30,9,6) + chain('1150,550 1236,640',50,11,7)
+ land('1092,552 1110,560 1135,597 1112,585') + land('680,490 700,478 735,470 725,490 695,508',.2,'#bdb800') + chain('680,495 730,480',24,8,5) + chain('800,432 825,435',22,7,5) + chain('840,435 890,435',8,4,4)
+ land('197,270 250,285 300,300 390,325 345,340 340,358 270,342 210,330 197,342') + land('193,220 235,220 240,226 225,233 195,231') + land('353,370 380,372 412,380 390,385 360,380',.1,'#bdb800') + land('440,440 455,433 475,440 455,446',.1,'#bdb800')
+ chain('400,580 480,552 590,535',46,5,5) + chain('212,605 280,598 345,590',40,4,5) + chain('360,585 420,572',16,4,4) + chain('560,540 595,538',10,5,4) + dots('279,225 405,330 422,348 330,430 342,435 380,495 396,507 640,515 663,520 845,452 1235,213',.85,3)
+ chain('1180,615 1236,628',10,5,6) + chain('1035,268 1190,248',20,6,5);

const sw = land('195,328 300,330 430,334 560,340 660,345 520,325 440,318 310,300 400,300 460,312 510,312 600,312 720,292 685,275 640,270 820,262 750,255 820,242 730,232 650,215 700,210 610,205 615,188 740,195 850,165 940,160 1000,150 1060,143 1250,145 1250,437 195,437', .03)
+ land('498,228 530,218 598,238 560,243 510,240') + chain('510,270 570,272',24,3,6) + chain('305,298 515,328',40,4,6) + chain('630,340 660,342',24,4,6) + chain('755,190 855,185',60,12,6) + chain('755,245 815,255',30,9,6) + chain('600,278 615,284',5,4,5) + chain('660,242 690,244',9,2,5) + chain('510,300 545,305',14,3,6) + chain('1100,138 1236,130',16,6,7)
+ land('1200,118 1245,114 1245,128 1215,125') + dots('268,328',1,4) + `<path d="M150 437H1250V480H150z" fill="#fff" stroke="none"/><path d="M195 436H1250" stroke-width="2.5"/>`;

const pacific = dots('541,264 548,264 554,262 561,260 587,268 590,272 603,278 608,284 615,285 622,288', .85, 4, 3)
+ `<circle cx="636" cy="306" r="10" fill="#ff0" stroke="#222" stroke-width="5"/>`
+ dots('219,148 429,229 513,241 563,598 599,635 326,722 645,745 588,837 531,860 203,935 240,915 239,916 167,978 184,990 190,1006 195,1024 170,1020 262,1062 258,1064 275,1037 281,1014 361,1023 345,935 367,934 272,758 921,817 930,833 938,833 932,845 951,852 957,862 917,1004 1028,1099 1157,1123 849,1182 206,1212 232,1480 238,1488 234,1484 590,1076 555,1064 586,1039 921,1072 990,1008 1002,1012 785,1111', .75, 4, 3)
+ dots('309,920 318,926 326,929 312,924', 1, 6, 4)
+ dots('200,142 245,153 281,188 326,194 397,205 459,234 368,357 502,549 508,560 543,584 548,676 232,655 233,665 315,752 333,752 337,730 627,774 309,827 336,845 338,874 440,874 446,885 705,880 737,856 392,938 249,960 285,966 655,961 665,981 655,1073 716,1086 753,1102 556,1018 572,1025 602,1044 1125,1135 1110,1112 237,1083 190,1053 955,1075 908,933 963,990', .28, 4, 3)
+ `<g opacity=".6">${chain('165,960 185,1000 200,1030',16,6,3.5)}${chain('765,943 835,945 840,970',26,14,4)}${chain('820,965 885,1000',20,8,4)}${chain('700,975 755,998',16,4,4.5)}${chain('905,1000 925,1035',16,14,3.5)}${chain('915,960 960,1080 1020,1070',16,16,3.5)}${chain('262,1040 280,1015',6,4,4)}</g>`;

const G = (x, y, sx, sy, c) => `<g transform="translate(${x},${y}) scale(${sx},${sy})">${c}</g>`;
document.getElementById('map').innerHTML = `<style>#map path{vector-effect:non-scaling-stroke}</style><g stroke="#1a0b26" stroke-width="2" stroke-linejoin="round">`
  + G(2040, 900, 1 / 2.063, 1 / 2.613, south) + G(2040, 360, 1 / 2.063, 1 / 2.613, asia) + G(440, 380, 1 / 3, 1 / 3, west) + G(440, 1340, 1 / 3, 1 / 3, sw) + G(450, 680, 1 / 3, 1 / 2.904, pacific) + '</g>';
</script>
</body>
</html>
